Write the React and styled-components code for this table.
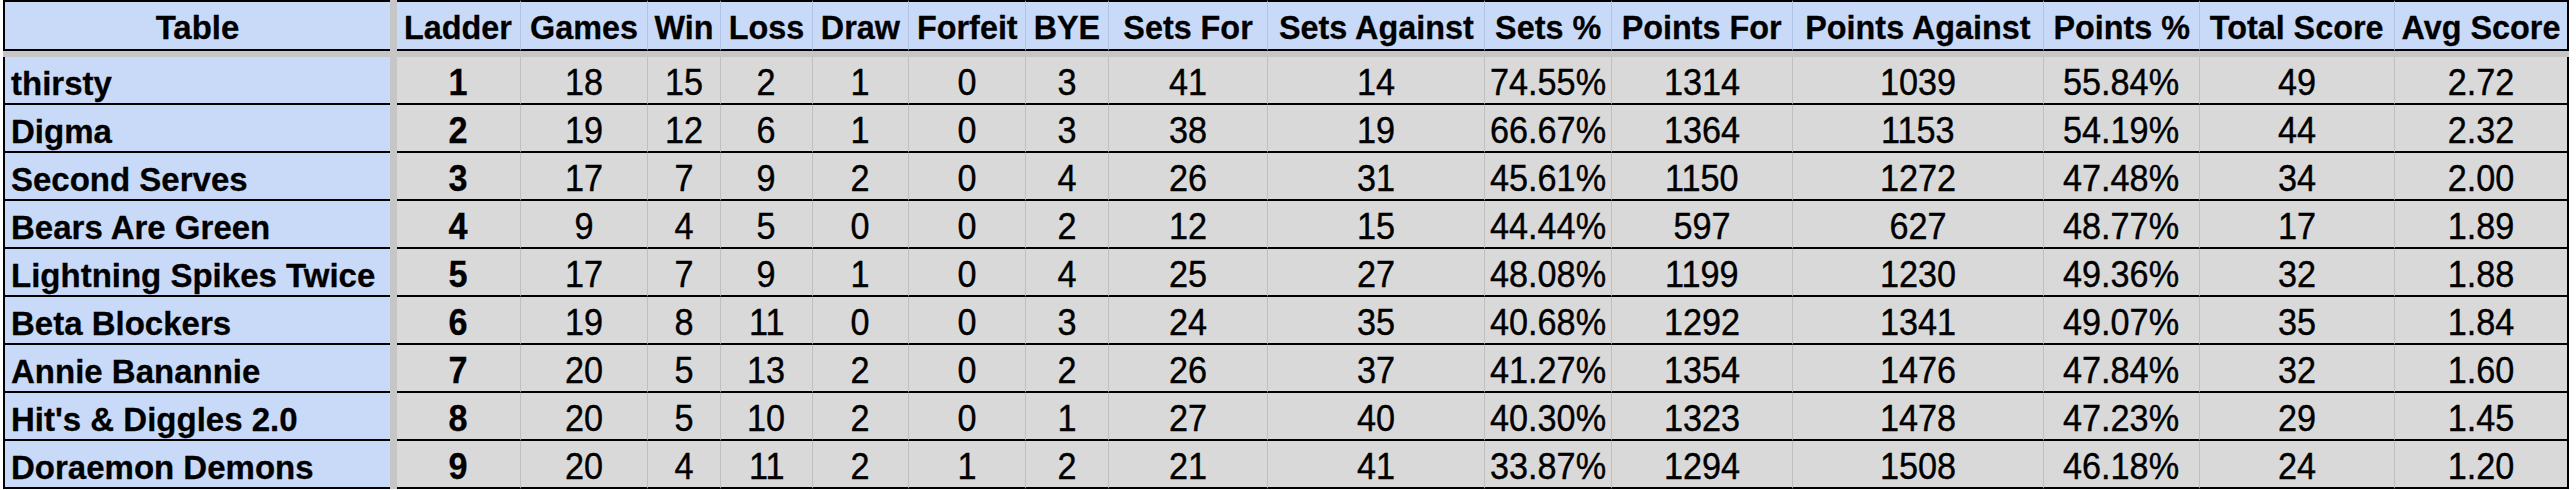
import React from 'react';
import styled, { createGlobalStyle } from 'styled-components';

const GlobalStyle = createGlobalStyle`
  html, body {
    margin: 0;
    padding: 0;
    background: #ffffff;
  }
  body {
    font-family: 'Liberation Sans', Arial, sans-serif;
    color: #000;
  }
`;

const Sheet = styled.div`
  padding-left: 3px;
  width: 2566px;
`;

const Row = styled.div`
  display: flex;
  height: ${props => (props.$header ? '51px' : '48px')};
`;

const FrozenRow = styled.div`
  height: 6px;
  background: #c6c6c6;
`;

const FrozenCol = styled.div`
  flex: 0 0 7px;
  background: #c6c6c6;
`;

// spreadsheet text is a touch condensed, so squeeze it sideways
const Txt = styled.span`
  display: inline-block;
  line-height: 1.15;
  transform: scaleX(${props => props.$sx || 1});
  transform-origin: ${props => (props.$left ? 'left bottom' : 'center bottom')};
`;

const NameCell = styled.div`
  flex: 0 0 387px;
  min-width: 0;
  box-sizing: border-box;
  display: flex;
  align-items: flex-end;
  justify-content: ${props => (props.$header ? 'center' : 'flex-start')};
  padding: ${props => (props.$header ? '0 0 2px' : '0 0 0 6px')};
  background: #c9daf8;
  border-left: 2px solid #000;
  border-top: ${props => (props.$header ? '2px solid #000' : 'none')};
  border-bottom: 2px solid #000;
  font-weight: 700;
  font-size: 33px;
  -webkit-text-stroke: 0.3px #000;
  white-space: nowrap;
`;

const HeadCell = styled.div`
  flex: 0 0 ${props => props.$w}px;
  min-width: 0;
  box-sizing: border-box;
  display: flex;
  align-items: flex-end;
  justify-content: center;
  padding-bottom: 2px;
  background: #c9daf8;
  border-top: 2px solid #000;
  border-bottom: 2px solid #000;
  border-right: ${props => (props.$last ? '2px solid #000' : '1px solid #b2c4e4')};
  font-weight: 700;
  font-size: 33px;
  -webkit-text-stroke: 0.3px #000;
  white-space: nowrap;
`;

const DataCell = styled.div`
  flex: 0 0 ${props => props.$w}px;
  min-width: 0;
  box-sizing: border-box;
  display: flex;
  align-items: flex-end;
  justify-content: center;
  background: #d9d9d9;
  border-bottom: 2px solid #000;
  border-right: ${props => (props.$last ? '2px solid #000' : '1px solid #bfbfbf')};
  font-weight: ${props => (props.$bold ? 700 : 400)};
  font-size: 36px;
  -webkit-text-stroke: ${props => (props.$bold ? '0.3px #000' : '0.4px #000')};
  white-space: nowrap;
`;

const columns = [
  { label: 'Ladder', w: 124 },
  { label: 'Games', w: 127 },
  { label: 'Win', w: 73 },
  { label: 'Loss', w: 92 },
  { label: 'Draw', w: 96 },
  { label: 'Forfeit', w: 117 },
  { label: 'BYE', w: 83 },
  { label: 'Sets For', w: 159 },
  { label: 'Sets Against', w: 217 },
  { label: 'Sets %', w: 127 },
  { label: 'Points For', w: 181 },
  { label: 'Points Against', w: 251 },
  { label: 'Points %', w: 156 },
  { label: 'Total Score', w: 195 },
  { label: 'Avg Score', w: 174 },
];

const teams = [
  ['thirsty', 1, 18, 15, 2, 1, 0, 3, 41, 14, '74.55%', 1314, 1039, '55.84%', 49, '2.72'],
  ['Digma', 2, 19, 12, 6, 1, 0, 3, 38, 19, '66.67%', 1364, 1153, '54.19%', 44, '2.32'],
  ['Second Serves', 3, 17, 7, 9, 2, 0, 4, 26, 31, '45.61%', 1150, 1272, '47.48%', 34, '2.00'],
  ['Bears Are Green', 4, 9, 4, 5, 0, 0, 2, 12, 15, '44.44%', 597, 627, '48.77%', 17, '1.89'],
  ['Lightning Spikes Twice', 5, 17, 7, 9, 1, 0, 4, 25, 27, '48.08%', 1199, 1230, '49.36%', 32, '1.88'],
  ['Beta Blockers', 6, 19, 8, 11, 0, 0, 3, 24, 35, '40.68%', 1292, 1341, '49.07%', 35, '1.84'],
  ['Annie Banannie', 7, 20, 5, 13, 2, 0, 2, 26, 37, '41.27%', 1354, 1476, '47.84%', 32, '1.60'],
  ["Hit's & Diggles 2.0", 8, 20, 5, 10, 2, 0, 1, 27, 40, '40.30%', 1323, 1478, '47.23%', 29, '1.45'],
  ['Doraemon Demons', 9, 20, 4, 11, 2, 1, 2, 21, 41, '33.87%', 1294, 1508, '46.18%', 24, '1.20'],
];

const App = () => {
  const lastIdx = columns.length - 1;
  return (
    <>
      <GlobalStyle />
      <Sheet>
        <Row $header>
          <NameCell $header><Txt>Table</Txt></NameCell>
          <FrozenCol />
          {columns.map((col, i) => (
            <HeadCell key={col.label} $w={col.w} $last={i === lastIdx}>
              <Txt $sx={0.98}>{col.label}</Txt>
            </HeadCell>
          ))}
        </Row>
        <FrozenRow />
        {teams.map(([name, ...values]) => (
          <Row key={name}>
            <NameCell><Txt $left>{name}</Txt></NameCell>
            <FrozenCol />
            {values.map((v, i) => (
              <DataCell key={i} $w={columns[i].w} $bold={i === 0} $last={i === lastIdx}>
                <Txt $sx={0.95}>{v}</Txt>
              </DataCell>
            ))}
          </Row>
        ))}
      </Sheet>
    </>
  );
};

export default App;
